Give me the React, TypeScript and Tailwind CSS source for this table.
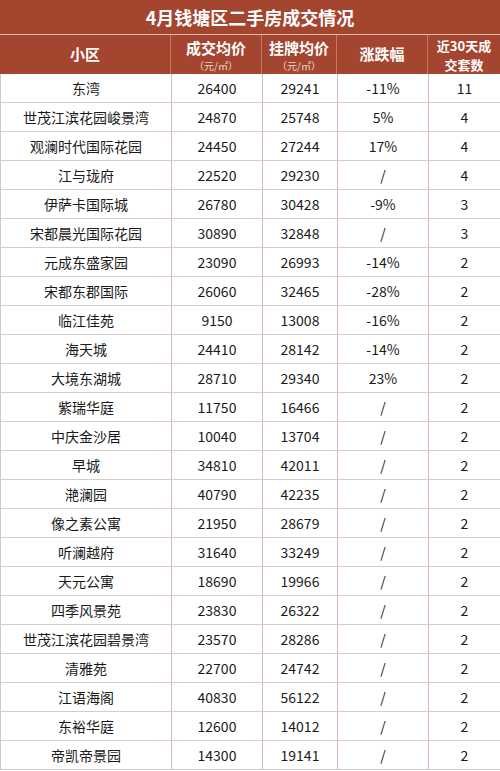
const rows: [string, string, string, string, string][] = [
  ["东湾", "26400", "29241", "-11%", "11"],
  ["世茂江滨花园峻景湾", "24870", "25748", "5%", "4"],
  ["观澜时代国际花园", "24450", "27244", "17%", "4"],
  ["江与珑府", "22520", "29230", "/", "4"],
  ["伊萨卡国际城", "26780", "30428", "-9%", "3"],
  ["宋都晨光国际花园", "30890", "32848", "/", "3"],
  ["元成东盛家园", "23090", "26993", "-14%", "2"],
  ["宋都东郡国际", "26060", "32465", "-28%", "2"],
  ["临江佳苑", "9150", "13008", "-16%", "2"],
  ["海天城", "24410", "28142", "-14%", "2"],
  ["大境东湖城", "28710", "29340", "23%", "2"],
  ["紫瑞华庭", "11750", "16466", "/", "2"],
  ["中庆金沙居", "10040", "13704", "/", "2"],
  ["早城", "34810", "42011", "/", "2"],
  ["滟澜园", "40790", "42235", "/", "2"],
  ["像之素公寓", "21950", "28679", "/", "2"],
  ["听澜越府", "31640", "33249", "/", "2"],
  ["天元公寓", "18690", "19966", "/", "2"],
  ["四季风景苑", "23830", "26322", "/", "2"],
  ["世茂江滨花园碧景湾", "23570", "28286", "/", "2"],
  ["清雅苑", "22700", "24742", "/", "2"],
  ["江语海阁", "40830", "56122", "/", "2"],
  ["东裕华庭", "12600", "14012", "/", "2"],
  ["帝凯帝景园", "14300", "19141", "/", "2"],
];

const cols = "grid grid-cols-[171px_91px_75px_91px_72px]";

export default function App() {
  return (
    <div
      className="w-[500px] h-[771px] overflow-hidden bg-white"
      style={{ fontFamily: '"Noto Sans CJK SC", "Noto Sans", sans-serif' }}
    >
      {/* Title */}
      <div className="h-[35px] bg-[#a4452f] border-b border-[#e9b9a8] flex items-center justify-center text-white font-bold text-[18px]">
        4月钱塘区二手房成交情况
      </div>

      {/* Header */}
      <div className={`${cols} h-[39px] bg-[#a4452f] text-white font-bold text-[15px] leading-normal`}>
        <div className="flex items-center justify-center border-r border-[#c77b66]">小区</div>
        <div className="flex flex-col items-center justify-center border-r border-[#c77b66]">
          <span className="leading-[21px]">成交均价</span>
          <span className="text-[10px] leading-[15px] font-normal text-[#f3d6cc]">（元/㎡）</span>
        </div>
        <div className="flex flex-col items-center justify-center border-r border-[#c77b66]">
          <span className="leading-[21px]">挂牌均价</span>
          <span className="text-[10px] leading-[15px] font-normal text-[#f3d6cc]">（元/㎡）</span>
        </div>
        <div className="flex items-center justify-center border-r border-[#c77b66]">涨跌幅</div>
        <div className="flex flex-col items-center justify-center text-[13px] leading-[19px]">
          <span>近30天成</span>
          <span>交套数</span>
        </div>
      </div>

      {/* Body */}
      <div className="border-l border-[#d9c4c4] text-[14px] text-[#1a1a1a]">
        {rows.map((r, i) => (
          <div key={i} className={`${cols} h-[29px] border-b border-[#d6cccc]`}>
            {r.map((c, j) => (
              <div
                key={j}
                className={`flex items-center justify-center ${j < 4 ? "border-r border-[#d9b9b9]" : "border-r border-[#d9c4c4]"}`}
              >
                {c}
              </div>
            ))}
          </div>
        ))}
      </div>
    </div>
  );
}
